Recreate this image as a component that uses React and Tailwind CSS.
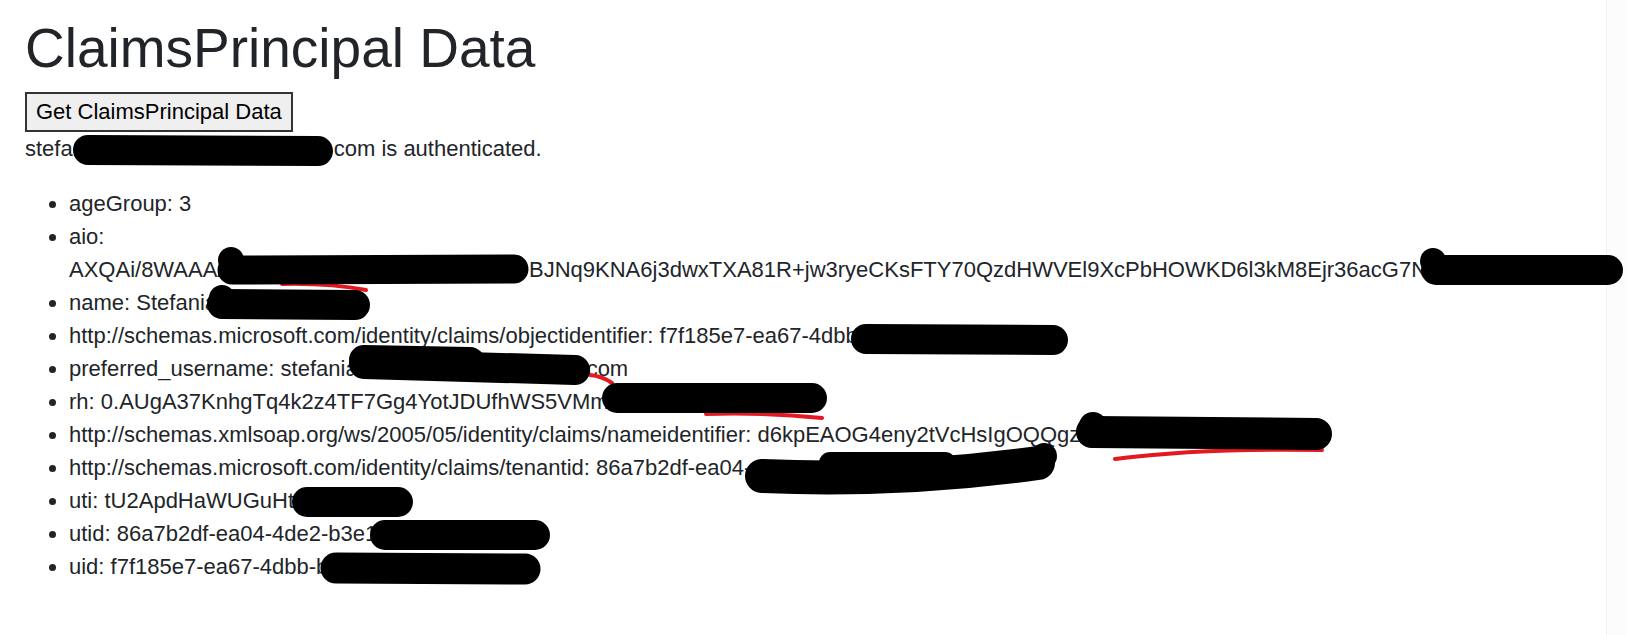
import React from 'react';

// hidden parts of the values are blacked out with marker strokes drawn on top
const claims = [
  { key: 'ageGroup', value: '3' },
  { key: 'aio', value: null },
  { key: 'name', value: 'Stefania' },
  { key: 'http://schemas.microsoft.com/identity/claims/objectidentifier', value: 'f7f185e7-ea67-4dbb' },
  { key: 'preferred_username', value: null },
  { key: 'rh', value: '0.AUgA37KnhgTq4k2z4TF7Gg4YotJDUfhWS5VMm' },
  { key: 'http://schemas.xmlsoap.org/ws/2005/05/identity/claims/nameidentifier', value: 'd6kpEAOG4eny2tVcHsIgOQQgz' },
  { key: 'http://schemas.microsoft.com/identity/claims/tenantid', value: '86a7b2df-ea04-' },
  { key: 'uti', value: 'tU2ApdHaWUGuHt' },
  { key: 'utid', value: '86a7b2df-ea04-4de2-b3e1' },
  { key: 'uid', value: 'f7f185e7-ea67-4dbb-b' },
];

const MarkerStrokes = () => (
  <svg
    className="pointer-events-none absolute left-0 top-0"
    width="1626"
    height="635"
    viewBox="0 0 1626 635"
    fill="none"
    strokeLinecap="round"
    strokeLinejoin="round"
  >
    {/* red pen underneath */}
    <g stroke="#e3191f" strokeWidth="4">
      <path d="M282 284 Q330 283 366 290" />
      <path d="M590 375 Q602 376 612 383" />
      <path d="M706 414 Q760 412 822 418" />
      <path d="M1115 459 Q1200 448 1322 450" />
      <path d="M958 459 L996 455" />
    </g>
    <g stroke="#000">
      <path d="M88 150 L318 151" strokeWidth="30" />
      <path d="M232 270 L514 269" strokeWidth="29" />
      <path d="M1436 270 L1608 270" strokeWidth="30" />
      <path d="M222 304 L355 305" strokeWidth="30" />
      <path d="M866 339 L1053 340" strokeWidth="30" />
      <path d="M364 364 L575 370" strokeWidth="30" />
      <path d="M364 360 L470 362" strokeWidth="30" />
      <path d="M617 398 L812 398" strokeWidth="30" />
      <path d="M1092 432 L1316 434" strokeWidth="32" />
      <path d="M762 476 Q900 482 1038 463" strokeWidth="34" />
      <path d="M830 463 L945 463" strokeWidth="22" />
      <path d="M1036 464 L1044 456" strokeWidth="26" />
      <path d="M307 502 L398 502" strokeWidth="30" />
      <path d="M385 535 L535 535" strokeWidth="30" />
      <path d="M336 568 L525 569" strokeWidth="31" />
    </g>
    <g fill="#000">
      <circle cx="231" cy="260" r="13" />
      <circle cx="1433" cy="261" r="13" />
      <circle cx="222" cy="298" r="13" />
      <circle cx="1093" cy="426" r="14" />
    </g>
  </svg>
);

const App = () => {
  return (
    <div className="relative flex min-h-[635px] w-full overflow-hidden bg-white font-['Liberation_Sans',Arial,sans-serif] text-[#212529]">
      <main className="min-w-0 flex-1 px-[25px] pt-[15px] text-[22px] leading-[33px]">
        <h1 className="mb-[11px] text-[55px] font-normal leading-[66px]">ClaimsPrincipal Data</h1>
        <button className="block h-[40px] border-2 border-[#333] bg-[#efefef] px-[9px] text-[22px] leading-none text-black">
          Get ClaimsPrincipal Data
        </button>
        <p className="mb-[22px] whitespace-nowrap">
          stefa<span className="inline-block w-[261px]" />com is authenticated.
        </p>

        <ul className="list-disc whitespace-nowrap pl-[44px]">
          {claims.map((claim) => {
            if (claim.key === 'aio') {
              return (
                <li key={claim.key}>
                  aio:
                  <br />
                  AXQAi/8WAAAA<span className="inline-block w-[297px]" />
                  BJNq9KNA6j3dwxTXA81R+jw3ryeCKsFTY70QzdHWVEl9XcPbHOWKD6l3kM8Ejr36acG7N
                </li>
              );
            }
            if (claim.key === 'preferred_username') {
              return (
                <li key={claim.key}>
                  preferred_username: stefania<span className="inline-block w-[229px]" />com
                </li>
              );
            }
            return (
              <li key={claim.key}>
                {claim.key}: {claim.value}
              </li>
            );
          })}
        </ul>
      </main>

      <div className="w-[20px] shrink-0 border-l border-[#f1f1f1] bg-[#fcfcfc]" />

      <MarkerStrokes />
    </div>
  );
};

export default App;
